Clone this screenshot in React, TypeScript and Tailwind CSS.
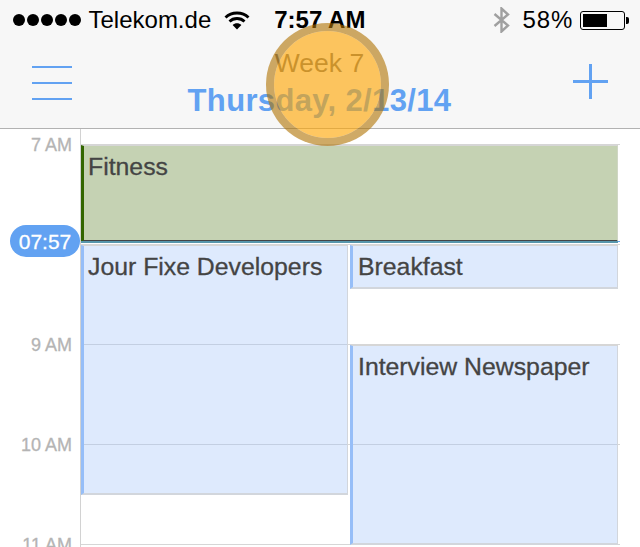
import React from "react";

const Wifi = () => (
  <svg width="26" height="20" viewBox="0 0 26 20" fill="none" stroke="#000">
    <path d="M1.5 7.5C7.5 1.5 18.5 1.5 24.5 7.5" strokeWidth="2.8" />
    <path d="M5.5 11.5C9.5 7.5 16.5 7.5 20.5 11.5" strokeWidth="2.8" />
    <path d="M13 19.5L8.6 15C11 12.8 15 12.8 17.4 15Z" fill="#000" stroke="none" />
  </svg>
);

const Bluetooth = () => (
  <svg width="18" height="26" viewBox="0 0 18 26" fill="none" stroke="#a0a0a0" strokeWidth="2.4">
    <path d="M1.5 7L15 18.5L8.5 24.5V1.5L15 7.5L1.5 19" />
  </svg>
);

const Battery = () => (
  <div className="flex items-center">
    <div className="flex h-[19px] w-[45px] items-center rounded-[3px] border border-black p-[2px]">
      <div className="h-full w-[24px] bg-black" />
    </div>
    <div className="ml-[1px] h-[7px] w-[3px] rounded-r-[2px] bg-black" />
  </div>
);

const StatusBar = () => (
  <div className="relative flex h-[40px] items-center text-[24px] leading-none text-black">
    <div className="ml-[13px] flex gap-[2.5px]">
      {[0, 1, 2, 3, 4].map((i) => (
        <span key={i} className="h-[11.5px] w-[11.5px] rounded-full bg-black" />
      ))}
    </div>
    <span className="ml-[8px]">Telekom.de</span>
    <div className="ml-[13px]">
      <Wifi />
    </div>
    <span className="ml-[24px] font-bold">7:57 AM</span>
    <div className="ml-[128px]">
      <Bluetooth />
    </div>
    <span className="ml-[11px] tracking-[1px]">58%</span>
    <div className="ml-[7px]">
      <Battery />
    </div>
  </div>
);

const NavBar = () => (
  <div className="relative flex h-[88px] items-start justify-between pl-[32px] pr-[32px]">
    <div className="mt-[26px] flex w-[40px] flex-col gap-[14px]">
      <div className="h-[2px] bg-[#62a2f2]" />
      <div className="h-[2px] bg-[#62a2f2]" />
      <div className="h-[2px] bg-[#62a2f2]" />
    </div>
    <div className="mt-[8px] flex flex-col items-center">
      <span className="text-[26.5px] leading-[30px] text-[#757575]">Week 7</span>
      <span className="mt-[5px] text-[31px] font-bold leading-[36px] tracking-[0.35px] text-[#62a2f2]">
        Thursday, 2/13/14
      </span>
    </div>
    <div className="mt-[24px] flex w-[41px] justify-end">
      <div className="relative h-[35px] w-[35px]">
        <div className="absolute left-[16px] top-0 h-full w-[3px] bg-[#62a2f2]" />
        <div className="absolute left-0 top-[16px] h-[3px] w-full bg-[#62a2f2]" />
      </div>
    </div>
  </div>
);

const HourLabel = ({ label }: { label: string }) => (
  <div className="flex h-[100px] items-start justify-end pr-[8px] pt-[6px] text-[18px] leading-[20px] text-[#b4b4b4] [-webkit-text-stroke:0.3px_#b4b4b4]">
    {label}
  </div>
);

const EventCard = ({
  title,
  className,
}: {
  title: string;
  className: string;
}) => (
  <div
    className={
      "absolute border-t border-b-2 border-l-[3px] border-r border-t-[#d6d6d6] pt-[6px] text-[24.8px] leading-[30px] text-[#444444] [-webkit-text-stroke:0.3px_#444444] " +
      className
    }
  >
    {title}
  </div>
);

export default function App() {
  return (
    <div className="relative h-[547px] w-[640px] overflow-hidden bg-white font-['Liberation_Sans',Arial,sans-serif]">
      {/* Header */}
      <div className="h-[129px] border-b border-[#b2b2b2] bg-[#f7f7f7]">
        <StatusBar />
        <NavBar />
      </div>

      {/* Day grid */}
      <div className="flex">
        <div className="w-[80px]">
          <HourLabel label="7 AM" />
          <HourLabel label="" />
          <HourLabel label="9 AM" />
          <HourLabel label="10 AM" />
          <HourLabel label="11 AM" />
        </div>
        <div className="relative h-[418px] w-[540px] border-l border-[#d2d2d2] pt-[15px]">
          {[0, 1, 2, 3, 4].map((i) => (
            <div key={i} className="h-[100px] border-t border-[#d6d6d6]" />
          ))}

          <EventCard
            title="Fitness"
            className="left-0 top-[16px] h-[97px] w-[537px] border-b-0 border-l-[#336600] border-r-[#cfd6c4] bg-[#c5d2b3] pl-[4px]"
          />
          <EventCard
            title="Jour Fixe Developers"
            className="left-0 top-[116px] h-[250px] w-[267px] border-l-[#96bef8] border-b-[#d2d6dc] border-r-[#d2d6dc] bg-[rgba(160,195,250,0.35)] pl-[4px]"
          />
          <EventCard
            title="Breakfast"
            className="left-[269px] top-[116px] h-[44px] w-[268px] border-l-[#96bef8] border-b-[#d2d6dc] border-r-[#d2d6dc] bg-[rgba(160,195,250,0.35)] pl-[5px]"
          />
          <EventCard
            title="Interview Newspaper"
            className="left-[269px] top-[216px] h-[200px] w-[268px] border-l-[#96bef8] border-b-[#d2d6dc] border-r-[#d2d6dc] bg-[rgba(160,195,250,0.35)] pl-[5px]"
          />

          {/* Current time line */}
          <div className="absolute left-0 top-[112px] h-[2px] w-[537px] bg-[#5796ac]" />
          <div className="absolute left-[537px] top-[112px] h-[1px] w-[2px] bg-[#62a2f2]" />
        </div>
      </div>

      {/* Current time pill */}
      <div className="absolute left-[10px] top-[225px] flex h-[32px] w-[70px] items-center justify-center rounded-full bg-[#62a2f2] text-[21px] leading-none text-white [-webkit-text-stroke:0.3px_#fff]">
        07:57
      </div>

      {/* Touch indicator */}
      <div className="absolute left-[266px] top-[23px] h-[123px] w-[123px] rounded-full border-[8px] border-[rgba(175,114,0,0.6)] bg-[rgba(255,165,0,0.62)] bg-clip-padding" />
    </div>
  );
}
